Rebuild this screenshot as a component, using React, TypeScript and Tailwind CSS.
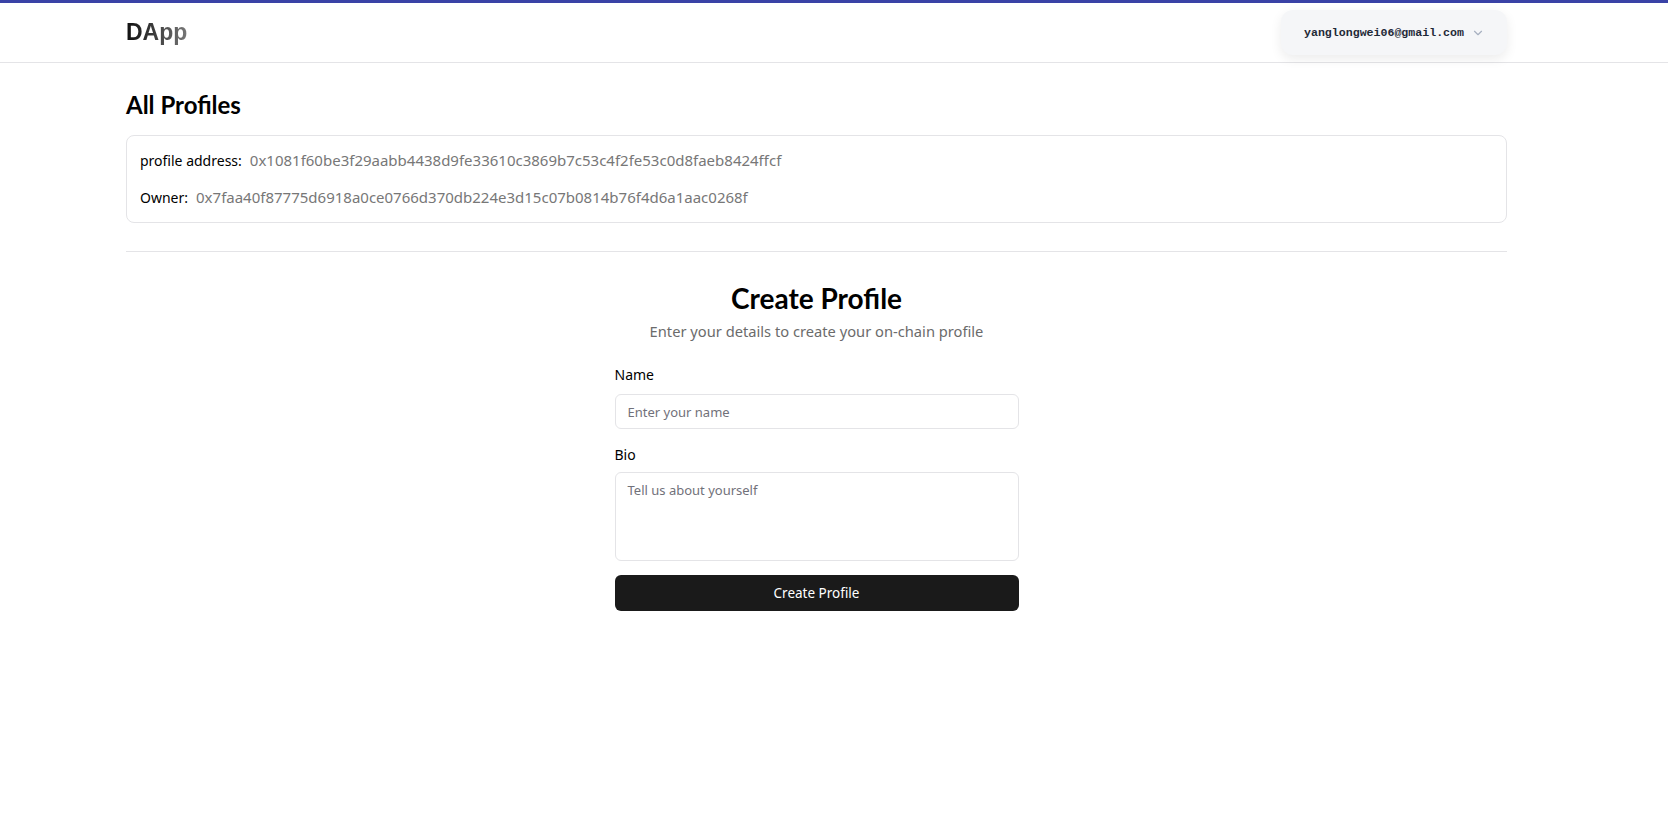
import React from "react"
import { ChevronDown } from "lucide-react"

const profiles = [
  {
    address: "0x1081f60be3f29aabb4438d9fe33610c3869b7c53c4f2fe53c0d8faeb8424ffcf",
    owner: "0x7faa40f87775d6918a0ce0766d370db224e3d15c07b0814b76f4d6a1aac0268f",
  },
]

const App = () => {
  return (
    <div className="min-h-screen bg-white font-['Noto_Sans',sans-serif] text-black">
      {/* Top accent */}
      <div className="h-[3px] bg-[#3a42a6]" />

      {/* Header */}
      <header className="border-b border-[#e4e4e7]">
        <div className="ml-[126px] flex h-[59px] w-[1381px] items-center justify-between">
          <span className="bg-gradient-to-r from-[#111] to-[#777] bg-clip-text font-['Liberation_Sans',sans-serif] text-[23px] font-bold text-transparent">
            DApp
          </span>
          <button className="flex h-[45px] items-center gap-[7px] rounded-xl bg-[#f5f6f8] pl-[23px] pr-[22px] shadow-[0_4px_12px_rgba(0,0,0,0.08)]">
            <span className="font-['Liberation_Mono',monospace] text-[11.6px] font-bold text-[#1f2937]">
              yanglongwei06@gmail.com
            </span>
            <ChevronDown size={14} className="text-[#a7b0c0]" />
          </button>
        </div>
      </header>

      <main className="ml-[126px] w-[1381px]">
        {/* All profiles */}
        <h2 className="mt-[26px] font-['Lato',sans-serif] text-[24px] font-bold leading-[32px]">All Profiles</h2>

        <div className="mt-[14px] flex flex-col gap-[16px] rounded-lg border border-[#e4e4e7] px-[13px] pb-[14px] pt-[14px]">
          {profiles.map((p) => (
            <React.Fragment key={p.address}>
              <p className="flex items-baseline gap-[8px] text-[14px] leading-[20px]">
                <span>profile address:</span>
                <span className="text-[15px] text-[#777]">{p.address}</span>
              </p>
              <p className="flex items-baseline gap-[8px] text-[14px] leading-[20px]">
                <span>Owner:</span>
                <span className="text-[15px] text-[#777]">{p.owner}</span>
              </p>
            </React.Fragment>
          ))}
        </div>

        <div className="mt-[28px] h-px bg-[#e4e4e7]" />

        {/* Create profile */}
        <section className="mx-auto mt-[27px] flex w-[404px] flex-col">
          <h1 className="text-center font-['Lato',sans-serif] text-[28px] font-bold leading-[38px]">Create Profile</h1>
          <p className="mt-[3px] text-center text-[14.7px] leading-[22px] text-[#6b6b6b]">
            Enter your details to create your on-chain profile
          </p>

          <label className="mt-[23px] text-[14px] leading-[20px]">Name</label>
          <input
            placeholder="Enter your name"
            className="mt-[9px] h-[35px] rounded-md border border-[#e4e4e7] px-3 text-[13px] outline-none placeholder:text-[#71717a]"
          />

          <label className="mt-[16px] text-[14px] leading-[20px]">Bio</label>
          <textarea
            placeholder="Tell us about yourself"
            className="mt-[7px] h-[89px] resize-none rounded-md border border-[#e4e4e7] px-3 py-2 text-[13px] outline-none placeholder:text-[#71717a]"
          />

          <button className="mt-[14px] h-[36px] rounded-md bg-[#1a1a1a] text-[13.5px] text-white">
            Create Profile
          </button>
        </section>
      </main>
    </div>
  )
}

export default App
